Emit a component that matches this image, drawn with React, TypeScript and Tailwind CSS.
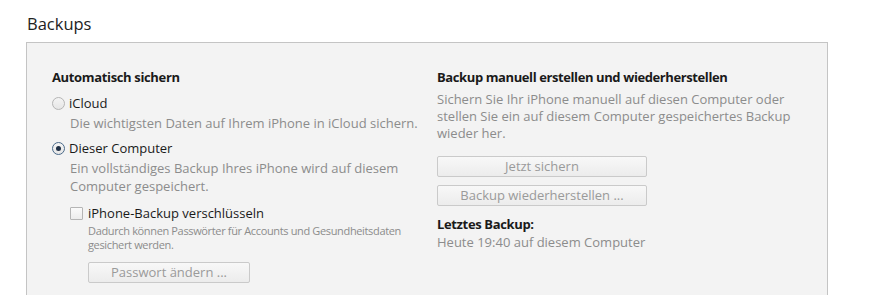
function Radio({ checked }: { checked?: boolean }) {
  return (
    <span
      className={`flex h-[13px] w-[13px] shrink-0 items-center justify-center rounded-full border bg-gradient-to-b from-[#f4f4f4] to-[#e6e6e6] ${
        checked ? 'border-[#4a6a8a]' : 'border-[#b5b5b5]'
      }`}
    >
      {checked && <span className="h-[5px] w-[5px] rounded-full bg-[#1f2f45]" />}
    </span>
  );
}

function Btn({ label, w }: { label: string; w: string }) {
  return (
    <button
      type="button"
      className={`${w} h-[21px] rounded-[2px] border border-[#cacaca] bg-gradient-to-b from-[#f8f8f8] to-[#ececec] text-[13px] leading-[19px] text-[#9a9a9a]`}
    >
      {label}
    </button>
  );
}

export default function App() {
  return (
    <div
      className="h-[298px] w-[889px] bg-white text-[13px] text-[#1a1a1a]"
      style={{ fontFamily: '"Open Sans", "Noto Sans", sans-serif' }}
    >
      <div className="pl-[27px] pt-[12px] text-[16.5px] leading-[23px] text-[#222]">Backups</div>
      <div className="ml-[26px] mt-[7px] flex h-[253px] w-[802px] border-x border-t border-[#c4c4c4] bg-[#f3f3f3] pl-[25px] pt-[25px]">
        <div className="w-[385px] shrink-0">
          <div className="text-[13px] font-bold leading-[18px] tracking-[-0.35px]">Automatisch sichern</div>

          <label className="mt-[8px] flex items-center gap-[4px] leading-[18px]">
            <Radio />
            <span>iCloud</span>
          </label>
          <div className="ml-[18px] mt-[2px] leading-[18px] text-[#8c8c8c]">
            Die wichtigsten Daten auf Ihrem iPhone in iCloud sichern.
          </div>

          <label className="mt-[7px] flex items-center gap-[4px] leading-[18px]">
            <Radio checked />
            <span>Dieser Computer</span>
          </label>
          <div className="ml-[18px] mt-[2px] leading-[18px] text-[#8c8c8c]">
            Ein vollständiges Backup Ihres iPhone wird auf diesem
            <br />
            Computer gespeichert.
          </div>

          <div className="ml-[18px] mt-[9px]">
            <label className="flex items-center gap-[5px] leading-[18px]">
              <span className="h-[13px] w-[13px] shrink-0 rounded-[1px] border border-[#b5b5b5] bg-gradient-to-b from-[#fafafa] to-[#ececec]" />
              <span>iPhone-Backup verschlüsseln</span>
            </label>
            <div className="ml-[18px] mt-[2px] text-[11px] leading-[14px] tracking-[-0.35px] text-[#8c8c8c]">
              Dadurch können Passwörter für Accounts und Gesundheitsdaten
              <br />
              gesichert werden.
            </div>
            <div className="ml-[18px] mt-[10px]">
              <Btn label="Passwort ändern ..." w="w-[162px]" />
            </div>
          </div>
        </div>

        <div className="w-[380px] whitespace-nowrap">
          <div className="text-[13px] font-bold leading-[18px] tracking-[-0.4px]">
            Backup manuell erstellen und wiederherstellen
          </div>
          <div className="mt-[5px] leading-[17px] text-[#8c8c8c]">
            Sichern Sie Ihr iPhone manuell auf diesen Computer oder
            <br />
            stellen Sie ein auf diesem Computer gespeichertes Backup
            <br />
            wieder her.
          </div>
          <div className="mt-[14px] flex flex-col gap-[8px]">
            <Btn label="Jetzt sichern" w="w-[210px]" />
            <Btn label="Backup wiederherstellen ..." w="w-[210px]" />
          </div>
          <div className="mt-[9px] font-bold leading-[18px] tracking-[-0.35px]">Letztes Backup:</div>
          <div className="leading-[18px] text-[#8c8c8c]">Heute 19:40 auf diesem Computer</div>
        </div>
      </div>
    </div>
  );
}
